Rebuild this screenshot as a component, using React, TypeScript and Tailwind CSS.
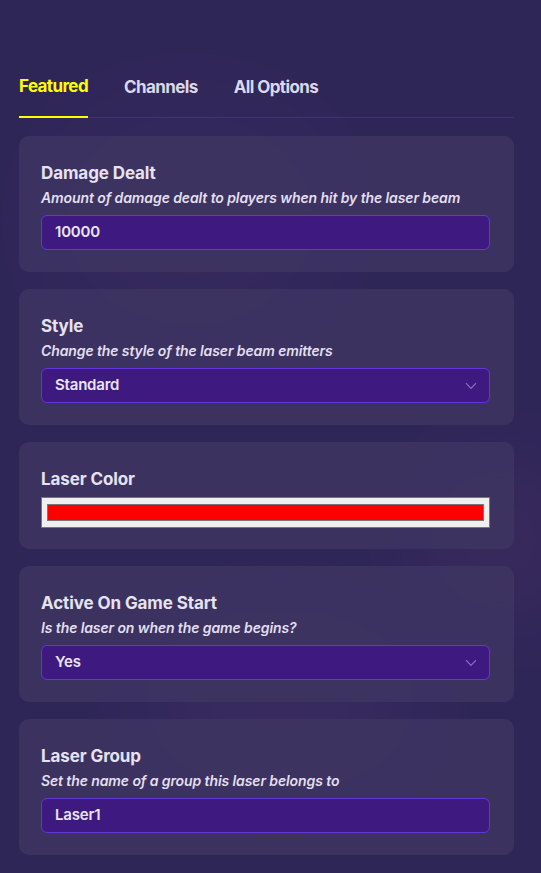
import React from "react";

const font = { fontFamily: "Inter, 'Noto Sans', sans-serif" };

function Chevron() {
  return (
    <svg width="12" height="8" viewBox="0 0 12 8" className="shrink-0">
      <path d="M1 1.2 L6 6.5 L11 1.2" fill="none" stroke="#8b6fc6" strokeWidth="1.2" />
    </svg>
  );
}

function Card({
  title,
  desc,
  children,
}: {
  title: string;
  desc?: string;
  children: React.ReactNode;
}) {
  return (
    <div className={`rounded-[10px] bg-[#3d3462]/90 pl-[22px] pr-[24px] pt-[25px] ${desc ? "pb-[22px]" : "pb-[21px]"}`}>
      <div className="text-[17px] leading-[24px] font-bold tracking-[-0.1px] text-[#e6e2ef]">{title}</div>
      {desc && (
        <div className="mt-[3px] text-[14px] leading-[20px] font-semibold italic tracking-[-0.1px] text-[#e3dfee]">
          {desc}
        </div>
      )}
      <div className={desc ? "mt-[7px]" : "mt-[6px]"}>{children}</div>
    </div>
  );
}

function TextBox({ value }: { value: string }) {
  return (
    <div className="flex h-[35px] items-center rounded-[6px] border border-[#6635d8] bg-[#3e1a80] px-[13px] text-[15px] font-semibold tracking-[-0.2px] text-[#e9e4f5]">
      {value}
    </div>
  );
}

function SelectBox({ value }: { value: string }) {
  return (
    <div className="flex h-[35px] items-center justify-between rounded-[6px] border border-[#6635d8] bg-[#3e1a80] pl-[13px] pr-[12px] text-[15px] font-semibold tracking-[-0.2px] text-[#e9e4f5]">
      <span>{value}</span>
      <Chevron />
    </div>
  );
}

function ColorBox() {
  return (
    <div className="flex h-[31px] items-center border border-[#767676] bg-[#efefef] px-[5px]">
      <div className="h-[17px] w-full border border-[#777777] bg-[#ff0000]" />
    </div>
  );
}

export default function App() {
  return (
    <div className="relative min-h-screen w-full overflow-hidden bg-[#2f2658]" style={font}>
      <div className="pointer-events-none absolute left-[60px] top-[120px] h-[200px] w-[260px] rounded-full bg-[#5a3c78] opacity-20 blur-[60px]" />
      <div className="pointer-events-none absolute left-[150px] top-[630px] h-[140px] w-[260px] rounded-full bg-[#5a3c78] opacity-25 blur-[50px]" />
      <div className="pointer-events-none absolute left-[430px] top-[470px] h-[140px] w-[140px] rounded-full bg-[#6a3a70] opacity-25 blur-[50px]" />
      <div className="relative pl-[19px] pr-[27px] pt-[74px]">
        <div className="flex items-end gap-[36px] border-b border-[#45289c]">
          <div className="-mb-px border-b-2 border-[#ffff00] pb-[18px] text-[17px] leading-[24px] font-bold tracking-[-0.6px] text-[#ffff00]">
            Featured
          </div>
          <div className="pb-[18px] text-[17px] leading-[24px] font-bold tracking-[-0.6px] text-[#dcd8ea]">
            Channels
          </div>
          <div className="pb-[18px] text-[17px] leading-[24px] font-bold tracking-[-0.6px] text-[#dcd8ea]">
            All Options
          </div>
        </div>
        <div className="mt-[18px] flex flex-col gap-[17px] pb-[18px]">
          <Card title="Damage Dealt" desc="Amount of damage dealt to players when hit by the laser beam">
            <TextBox value="10000" />
          </Card>
          <Card title="Style" desc="Change the style of the laser beam emitters">
            <SelectBox value="Standard" />
          </Card>
          <Card title="Laser Color">
            <ColorBox />
          </Card>
          <Card title="Active On Game Start" desc="Is the laser on when the game begins?">
            <SelectBox value="Yes" />
          </Card>
          <Card title="Laser Group" desc="Set the name of a group this laser belongs to">
            <TextBox value="Laser1" />
          </Card>
        </div>
      </div>
    </div>
  );
}
